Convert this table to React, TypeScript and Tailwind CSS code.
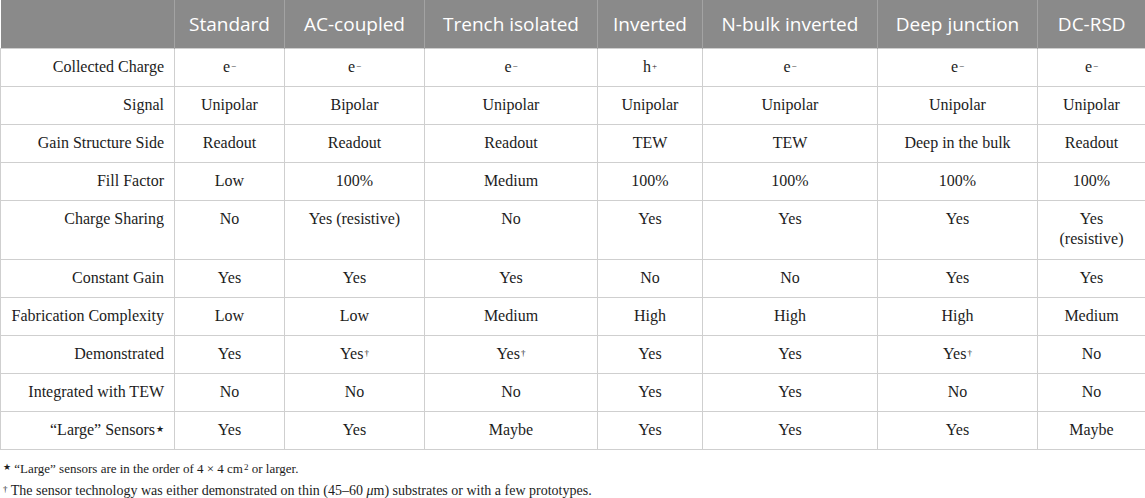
const headers = ["Standard", "AC-coupled", "Trench isolated", "Inverted", "N-bulk inverted", "Deep junction", "DC-RSD"];
const widths = [174, 110, 140, 173, 105, 175, 160, 108];

const Sup = ({ children }: { children: React.ReactNode }) => (
  <sup className="text-[9px] relative -top-[3px] ml-px">{children}</sup>
);

const e = <>e<Sup>−</Sup></>;
const h = <>h<Sup>+</Sup></>;
const yd = <>Yes<Sup>†</Sup></>;

type Row = { label: React.ReactNode; cells: React.ReactNode[]; tall?: boolean };

const rows: Row[] = [
  { label: "Collected Charge", cells: [e, e, e, h, e, e, e] },
  { label: "Signal", cells: ["Unipolar", "Bipolar", "Unipolar", "Unipolar", "Unipolar", "Unipolar", "Unipolar"] },
  { label: "Gain Structure Side", cells: ["Readout", "Readout", "Readout", "TEW", "TEW", "Deep in the bulk", "Readout"] },
  { label: "Fill Factor", cells: ["Low", "100%", "Medium", "100%", "100%", "100%", "100%"] },
  {
    label: "Charge Sharing",
    cells: ["No", "Yes (resistive)", "No", "Yes", "Yes", "Yes", <>Yes<br />(resistive)</>],
    tall: true,
  },
  { label: "Constant Gain", cells: ["Yes", "Yes", "Yes", "No", "No", "Yes", "Yes"] },
  { label: "Fabrication Complexity", cells: ["Low", "Low", "Medium", "High", "High", "High", "Medium"] },
  { label: "Demonstrated", cells: ["Yes", yd, yd, "Yes", "Yes", yd, "No"] },
  { label: "Integrated with TEW", cells: ["No", "No", "No", "Yes", "Yes", "No", "No"] },
  { label: <>“Large” Sensors<Sup>★</Sup></>, cells: ["Yes", "Yes", "Maybe", "Yes", "Yes", "Yes", "Maybe"] },
];

export default function App() {
  return (
    <div className="w-[1145px] h-[498px] bg-white overflow-hidden text-[#1c1c1c] font-['Liberation_Serif',serif]">
      <table className="w-[1145px] table-fixed border-collapse">
        <colgroup>
          {widths.map((w, i) => (
            <col key={i} style={{ width: w }} />
          ))}
        </colgroup>
        <thead>
          <tr className="h-[48px] bg-[#8a8a8a] text-white font-['Open_Sans',sans-serif] text-[19px]">
            <th className="border-r border-[#a3a3a3]"></th>
            {headers.map((t, i) => (
              <th key={t} className={`font-normal text-center ${i < headers.length - 1 ? "border-r border-[#a3a3a3]" : ""}`}>
                {t}
              </th>
            ))}
          </tr>
        </thead>
        <tbody className="text-[16px]">
          {rows.map((r, i) => (
            <tr key={i} className={r.tall ? "h-[59px]" : "h-[38px]"}>
              <td className={`border border-[#cfcfcf] text-right pr-[10px] leading-[20px] ${r.tall ? "align-top pt-[8px]" : ""}`}>
                {r.label}
              </td>
              {r.cells.map((c, j) => (
                <td
                  key={j}
                  className={`border border-[#cfcfcf] text-center leading-[20px] ${r.tall ? "align-top pt-[8px]" : ""}`}
                >
                  {c}
                </td>
              ))}
            </tr>
          ))}
        </tbody>
      </table>
      <div className="pt-[8px] pl-[2px] leading-[22px]">
        <div className="text-[13px]">
          <Sup>★</Sup> “Large” sensors are in the order of 4 × 4 cm<Sup>2</Sup> or larger.
        </div>
        <div className="text-[14px]">
          <Sup>†</Sup> The sensor technology was either demonstrated on thin (45–60 <i>μ</i>m) substrates or with a few prototypes.
        </div>
      </div>
    </div>
  );
}
